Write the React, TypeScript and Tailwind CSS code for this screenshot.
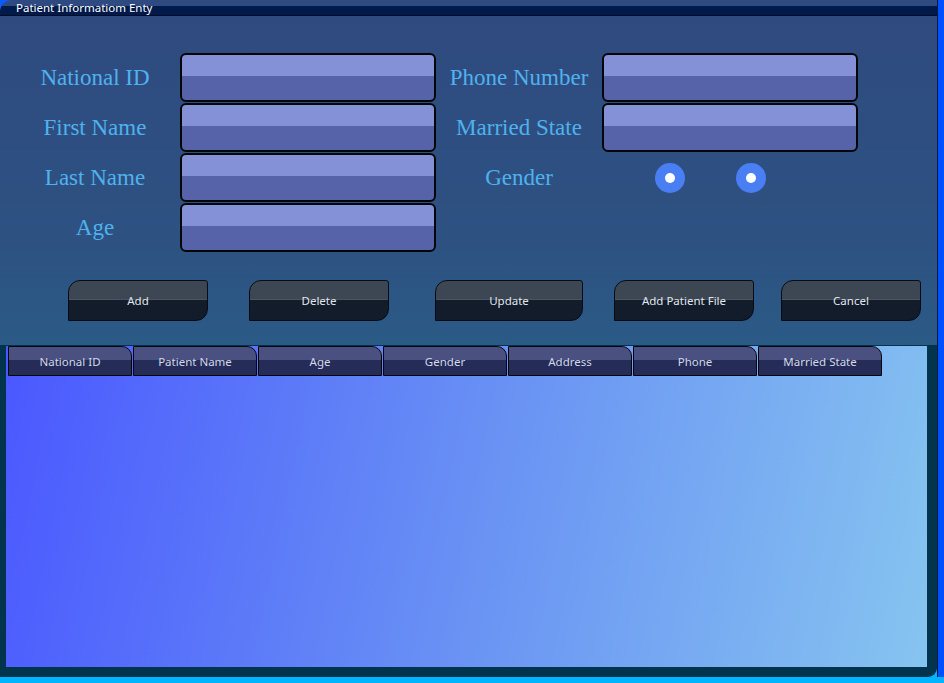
import React from "react";

const leftFields = ["National ID", "First Name", "Last Name", "Age"];

const buttons = [
  { label: "Add", cls: "ml-[68px] w-[140px]" },
  { label: "Delete", cls: "ml-[41px] w-[140px]" },
  { label: "Update", cls: "ml-[46px] w-[148px]" },
  { label: "Add Patient File", cls: "ml-[31px] w-[140px]" },
  { label: "Cancel", cls: "ml-[27px] w-[140px]" },
];

const columns = ["National ID", "Patient Name", "Age", "Gender", "Address", "Phone", "Married State"];

function Label({ text }: { text: string }) {
  return (
    <div className="flex items-center justify-center h-[50px] pb-[2px] font-['Liberation_Serif',serif] text-[23px] leading-none text-[#4fb2ee]">
      {text}
    </div>
  );
}

function Field() {
  return (
    <div className="h-[50px] pb-[1px]">
      <div className="h-full rounded-[6px] border-2 border-[#050608] bg-[linear-gradient(to_bottom,#8591d7_0,#8591d7_47%,#5763a8_47%,#5763a8_100%)]" />
    </div>
  );
}

function Radio() {
  return (
    <div className="w-[30px] h-[30px] rounded-full bg-[#4a7ef3] flex items-center justify-center">
      <div className="w-[10px] h-[10px] rounded-full bg-white" />
    </div>
  );
}

export default function App() {
  return (
    <div className="w-[944px] h-[683px] bg-[#00b4ff] flex flex-col overflow-hidden font-['Noto_Sans',sans-serif]">
      <div className="flex h-[677px]">
        <div className="w-[937px] flex flex-col">
          {/* title bar */}
          <div className="h-[16px] bg-[#0a5cff]">
            <div className="h-full rounded-tl-[12px] bg-[linear-gradient(to_bottom,#2f4a80_0,#2f4a80_6px,#001a4c_6px,#001a4c_15px,#000b28_15px)] flex items-start pl-[16px]">
              <span className="text-[11.5px] leading-[15px] text-white">Patient Informatiom Enty</span>
            </div>
          </div>

          {/* form */}
          <div className="h-[329px] bg-[linear-gradient(to_bottom,#2f4a7f,#2d5282_70%,#2b5a86)] flex flex-col">
            <div className="pt-[37px] pl-[20px] grid grid-cols-[160px_256px_166px_256px]">
              <div className="pr-[10px] flex flex-col">
                {leftFields.map((f) => (
                  <Label key={f} text={f} />
                ))}
              </div>
              <div className="flex flex-col">
                {leftFields.map((f) => (
                  <Field key={f} />
                ))}
              </div>
              <div className="flex flex-col">
                <Label text="Phone Number" />
                <Label text="Married State" />
                <Label text="Gender" />
              </div>
              <div className="flex flex-col">
                <Field />
                <Field />
                <div className="h-[50px] flex items-center pl-[53px] gap-[51px]">
                  <Radio />
                  <Radio />
                </div>
              </div>
            </div>

            <div className="flex mt-[27px]">
              {buttons.map((b) => (
                <div
                  key={b.label}
                  className={`${b.cls} h-[41px] border border-[#070c14] rounded-tl-[12px] rounded-tr-[3px] rounded-br-[12px] bg-[linear-gradient(to_bottom,#3c4753_0,#3c4753_47%,#4a5561_47%,#4a5561_50%,#121c2a_50%,#121c2a_100%)] flex items-center justify-center text-[11.5px] text-[#e2e7ee]`}
                >
                  {b.label}
                </div>
              ))}
            </div>
          </div>

          {/* data grid */}
          <div className="flex-1 bg-[#02344d] rounded-br-[9px] pl-[6px] pr-[10px] pt-[1px] pb-[10px] flex">
            <div className="flex-1 bg-[linear-gradient(102deg,#4a58ff_0%,#6890f4_50%,#86c4f0_100%)]">
              <div className="flex gap-[1px] pl-[2px]">
                {columns.map((c) => (
                  <div
                    key={c}
                    className="w-[124px] h-[30px] pt-[1px] border border-[#05060c] rounded-tr-[10px] bg-[linear-gradient(to_bottom,#4a5080_0,#4a5080_48%,#262c58_48%,#262c58_100%)] flex items-center justify-center text-[11.5px] text-[#d3d8ea]"
                  >
                    {c}
                  </div>
                ))}
              </div>
            </div>
          </div>
        </div>
        <div className="flex-1 border-l border-[#001a40] bg-[#0050ff]" />
      </div>
    </div>
  );
}
